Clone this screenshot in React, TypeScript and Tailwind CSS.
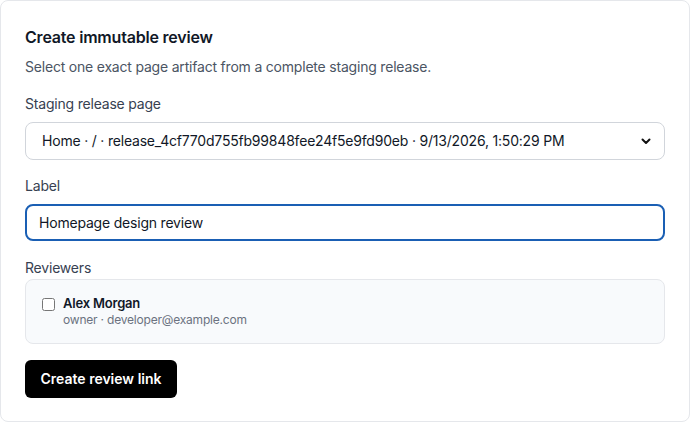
import React from 'react';

export default function App() {
  return (
    <div className="w-[691px] h-[423px] bg-white tracking-[-0.2px]" style={{ fontFamily: 'Inter, "Noto Sans", sans-serif' }}>
      <div className="w-[690px] h-[422px] border border-[#e5e7eb] rounded-lg px-6 pt-[26px]">
        <h2 className="text-base font-semibold text-[#111827] leading-5">Create immutable review</h2>
        <p className="mt-[10px] text-sm text-[#4b5563] leading-5">
          Select one exact page artifact from a complete staging release.
        </p>

        <label className="block mt-[17px] text-sm text-[#374151] leading-5">Staging release page</label>
        <div className="mt-[8px] h-[38px] w-[640px] border border-[#d1d5db] rounded-lg flex items-center pl-4 pr-3 text-sm text-[#111827]">
          <span className="flex-1">Home · / · release_4cf770d755fb99848fee24f5e9fd90eb · 9/13/2026, 1:50:29 PM</span>
          <svg width="12" height="12" viewBox="0 0 24 24" fill="none" stroke="#111" strokeWidth="4" strokeLinecap="round" strokeLinejoin="round">
            <path d="M5 9l7 7 7-7" />
          </svg>
        </div>

        <label className="block mt-[16px] text-sm text-[#374151] leading-5">Label</label>
        <input
          className="mt-[8px] h-[37px] w-[640px] border-2 border-[#1a5fb4] rounded-lg px-3 text-sm text-[#111827] outline-none"
          defaultValue="Homepage design review"
        />

        <label className="block mt-[17px] text-sm text-[#374151] leading-5">Reviewers</label>
        <div className="mt-[1px] w-[640px] h-[65px] bg-[#f8fafc] border border-[#e5e7eb] rounded-lg flex items-start gap-[8px] pl-[16px] pt-[15px]">
          <input type="checkbox" className="mt-[3px] w-[13px] h-[13px]" />
          <div className="flex flex-col">
            <span className="text-[13px] font-semibold text-[#111827] leading-4">Alex Morgan</span>
            <span className="text-xs text-[#6b7280] leading-4 mt-[1px]">owner · developer@example.com</span>
          </div>
        </div>

        <button className="mt-[16px] h-[38px] w-[152px] bg-black text-white text-sm font-semibold rounded-md tracking-normal">
          Create review link
        </button>
      </div>
    </div>
  );
}
